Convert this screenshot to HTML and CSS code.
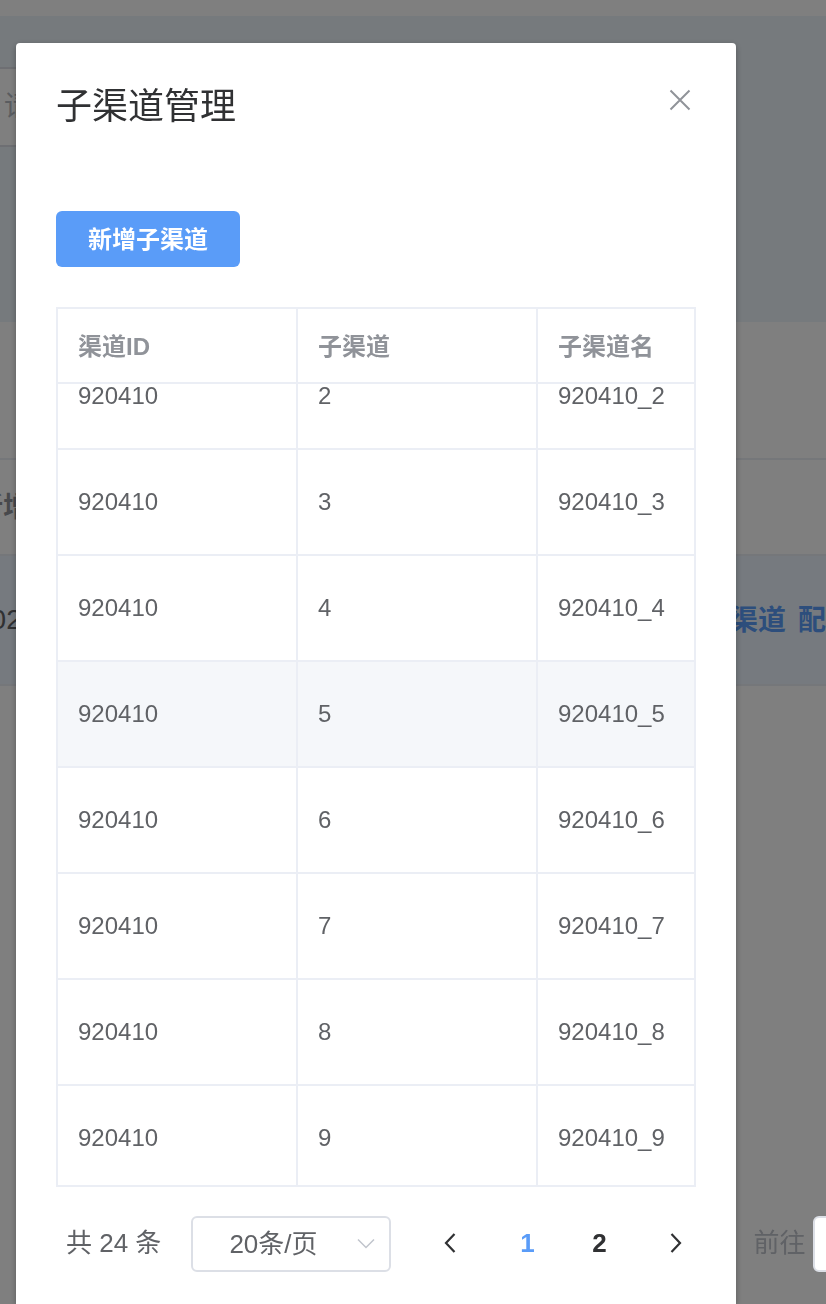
FILE: index.html
```html
<!DOCTYPE html>
<html lang="zh-CN">
<head>
<meta charset="utf-8">
<title>子渠道管理</title>
<link rel="stylesheet" href="styles.css">
</head>
<body>
<main class="page">
  <section class="filter">
    <input class="filter-input" type="text" placeholder="请选择" aria-label="筛选">
  </section>
  <section class="list">
    <div class="list-row list-head">新增</div>
    <div class="list-row list-item">
      <span>102</span>
      <span class="list-actions"><a href="#sub">子渠道</a><a href="#config">配置</a></span>
    </div>
  </section>
</main>

<div class="overlay">
  <section class="dialog" role="dialog" aria-labelledby="dialog-title">
    <header class="dialog-head">
      <h1 class="dialog-title" id="dialog-title">子渠道管理</h1>
      <button class="close" type="button" aria-label="关闭">
        <svg width="22" height="22" viewBox="0 0 22 22" fill="none" stroke="#909399" stroke-width="2"><path d="M1.500 1.500l19 19M20.500 1.500l-19 19"/></svg>
      </button>
    </header>
    <div class="dialog-body">
      <button class="primary" type="button">新增子渠道</button>
      <div class="grid">
        <table class="cells grid-head">
          <colgroup><col class="col-wide"><col class="col-wide"><col></colgroup>
          <thead><tr><th scope="col">渠道ID</th><th scope="col">子渠道</th><th scope="col">子渠道名</th></tr></thead>
        </table>
        <div class="grid-scroll">
          <table class="cells grid-rows" aria-label="子渠道列表">
            <colgroup><col class="col-wide"><col class="col-wide"><col></colgroup>
            <tbody>
              <tr><td>920410</td><td>2</td><td>920410_2</td></tr>
              <tr><td>920410</td><td>3</td><td>920410_3</td></tr>
              <tr><td>920410</td><td>4</td><td>920410_4</td></tr>
              <tr class="hover"><td>920410</td><td>5</td><td>920410_5</td></tr>
              <tr><td>920410</td><td>6</td><td>920410_6</td></tr>
              <tr><td>920410</td><td>7</td><td>920410_7</td></tr>
              <tr><td>920410</td><td>8</td><td>920410_8</td></tr>
              <tr><td>920410</td><td>9</td><td>920410_9</td></tr>
            </tbody>
          </table>
        </div>
      </div>
      <nav class="pagination" aria-label="分页">
        <span class="total">共 24 条</span>
        <span class="size">
          <select class="size-select" aria-label="每页条数"><option>20条/页</option></select>
          <svg class="size-arrow" width="18" height="12" viewBox="0 0 18 12" fill="none" stroke="#c0c4cc" stroke-width="1.500"><path d="M1 1.500l8 8 8-8"/></svg>
        </span>
        <span class="pager">
          <button class="page-button" type="button" aria-label="上一页"><svg width="12" height="20" viewBox="0 0 12 20" fill="none" stroke="#303133" stroke-width="2.200"><path d="M10.500 1L2 10l8.500 9"/></svg></button>
          <span class="numbers">
            <button class="page-button current" type="button" aria-current="page">1</button>
            <button class="page-button" type="button">2</button>
          </span>
          <button class="page-button" type="button" aria-label="下一页"><svg width="12" height="20" viewBox="0 0 12 20" fill="none" stroke="#303133" stroke-width="2.200"><path d="M1.500 1L10 10l-8.500 9"/></svg></button>
        </span>
        <label class="jump"><span class="jump-label">前往</span><input class="jump-input" type="text"></label>
      </nav>
    </div>
  </section>
</div>
</body>
</html>
```
FILE: styles.css
```css
* {
  box-sizing: border-box;
}

body {
  margin: 0;
  height: 100vh;
  overflow: hidden;
  background: #fff;
  color: #606266;
  font-family: "Liberation Sans", "Noto Sans CJK SC", sans-serif;
}

button,
input,
select {
  font-family: inherit;
}

/* Page behind the dialog */
.page {
  padding-top: 16px;
  overflow: hidden;
  font-size: 28px;
}

.filter {
  height: 306px;
  padding-top: 51px;
  background: #ecf4fa;
}

.filter-input {
  display: block;
  width: 50%;
  height: 80px;
  margin-left: -32px;
  padding: 0 34px;
  border: 2px solid #dcdfe6;
  background: #fff;
  color: #606266;
  font-size: 28px;
}

.filter-input::placeholder {
  color: #b4b8c0;
}

.list {
  margin-top: 136px;
  border-top: 2px solid #ebeef5;
}

.list-row {
  display: flex;
  align-items: center;
  justify-content: space-between;
  margin: 0 -28px 0 -25px;
  border-bottom: 2px solid #ebeef5;
  white-space: nowrap;
}

.list-head {
  height: 96px;
  padding-bottom: 4px;
  color: #909399;
  font-weight: 700;
}

.list-item {
  height: 130px;
  background: #ecf5ff;
}

.list-actions {
  display: flex;
  gap: 12px;
  padding-bottom: 4px;
}

.list-actions a {
  color: #5a9cf8;
  font-weight: 700;
  text-decoration: none;
}

/* Dialog */
.overlay {
  position: fixed;
  inset: 0;
  display: flex;
  padding: 43px 90px 0 16px;
  overflow: hidden;
  background: rgba(0, 0, 0, 0.5);
}

.dialog {
  flex: 1;
  min-width: 0;
  border-radius: 4px 4px 0 0;
  background: #fff;
  box-shadow: 0 2px 6px rgba(0, 0, 0, 0.3);
}

.dialog-head {
  display: flex;
  align-items: flex-start;
  justify-content: space-between;
  padding: 40px 40px 20px;
}

.dialog-title {
  margin: 0;
  color: #303133;
  font-size: 36px;
  font-weight: 400;
  line-height: 48px;
}

.close {
  display: flex;
  padding: 6px 5px;
  border: 0;
  background: none;
}

.dialog-body {
  padding: 60px 40px;
}

.primary {
  display: block;
  height: 56px;
  padding: 0 32px 4px;
  border: 0;
  border-radius: 6px;
  background: #5a9cf8;
  color: #fff;
  font-size: 24px;
  font-weight: 700;
}

.grid {
  margin-top: 40px;
  border: 2px solid #ebeef5;
  font-size: 24px;
}

.cells {
  width: 100%;
  table-layout: fixed;
  border-collapse: separate;
  border-spacing: 0;
}

.col-wide {
  width: 240px;
}

.cells th,
.cells td {
  padding: 0 20px;
  border-right: 2px solid #ebeef5;
  border-bottom: 2px solid #ebeef5;
  text-align: left;
  white-space: nowrap;
}

.cells th:last-child,
.cells td:last-child {
  padding-right: 0;
  border-right: 0;
}

.cells th {
  height: 75px;
  padding-bottom: 2px;
  color: #909399;
  font-weight: 700;
}

.cells td {
  height: 106px;
}

.hover {
  background: #f5f7fa;
}

.grid-scroll {
  height: 801px;
  overflow: hidden;
}

/* List scrolled part-way through its first visible row */
.grid-rows {
  margin-top: -40px;
}

/* Pagination */
.pagination {
  display: flex;
  align-items: center;
  margin-top: 29px;
  padding-left: 10px;
  font-size: 26px;
  white-space: nowrap;
}

.total,
.jump-label {
  padding-bottom: 7px;
}

.total {
  margin-right: 30px;
}

.size {
  position: relative;
  flex: none;
  width: 200px;
}

.size-select {
  display: block;
  width: 100%;
  height: 56px;
  padding: 0 36px;
  appearance: none;
  border: 2px solid #dcdfe6;
  border-radius: 6px;
  background: #fff;
  color: #606266;
  font-size: 26px;
}

.size-arrow {
  position: absolute;
  top: 22px;
  right: 16px;
  pointer-events: none;
}

.pager {
  display: flex;
  gap: 5px;
  margin-left: 23px;
}

.numbers {
  display: flex;
}

.page-button {
  display: flex;
  align-items: center;
  justify-content: center;
  width: 72px;
  height: 56px;
  padding: 0 0 2px;
  border: 0;
  background: none;
  color: #303133;
  font-size: 26px;
  font-weight: 700;
}

.current {
  color: #5a9cf8;
}

.jump {
  display: flex;
  align-items: center;
  gap: 8px;
  margin-left: 41px;
}

.jump-input {
  width: 100px;
  height: 56px;
  border: 2px solid #dcdfe6;
  border-radius: 6px;
  background: #fff;
  font-size: 26px;
}
```
